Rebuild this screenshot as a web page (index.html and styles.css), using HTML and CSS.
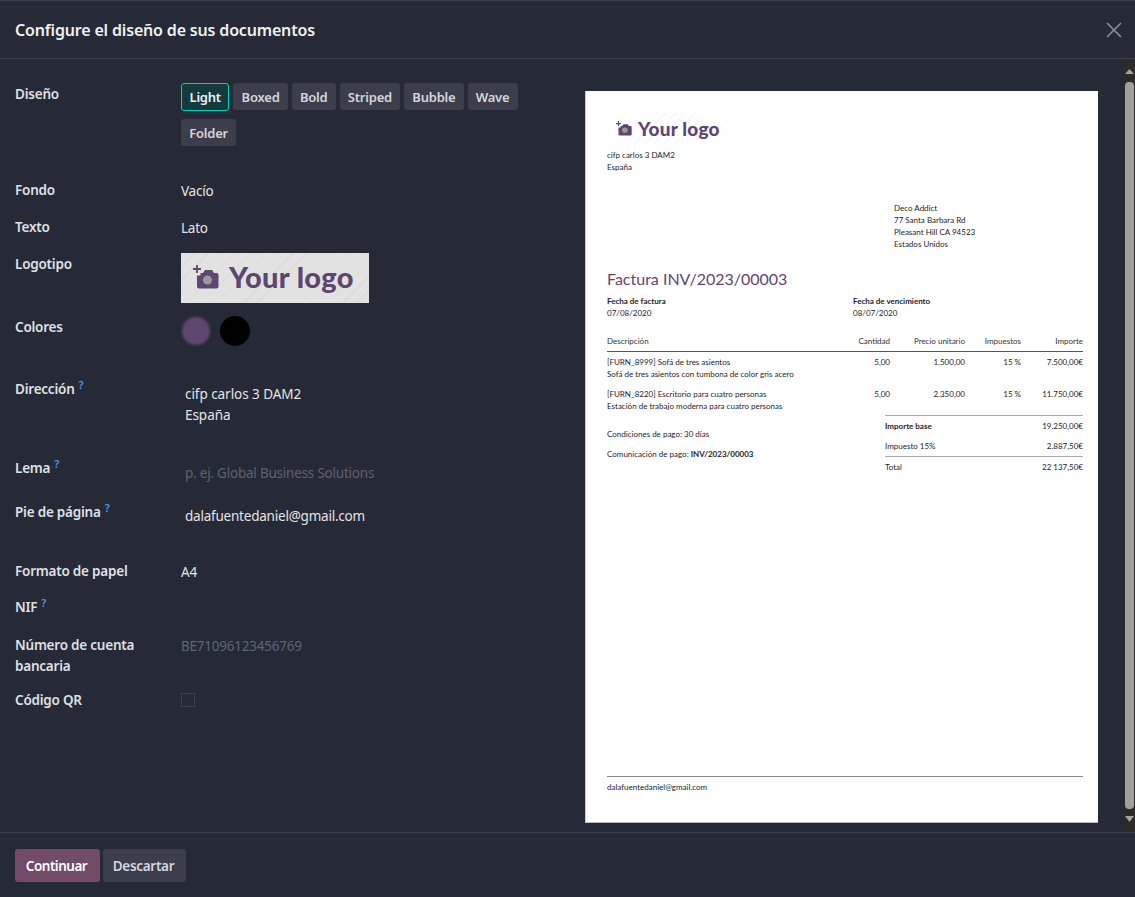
FILE: index.html
```html
<!DOCTYPE html>
<html lang="es">
<head>
<meta charset="utf-8">
<title>Configure el diseño de sus documentos</title>
<link rel="stylesheet" href="styles.css">
</head>
<body>
<div class="modal">
  <header class="head">
    <h1 class="title">Configure el diseño de sus documentos</h1>
    <svg class="close" width="16" height="16" viewBox="0 0 16 16"><path d="M1 1 15 15M15 1 1 15" stroke="#8b8e98" stroke-width="1.6" fill="none"/></svg>
  </header>
  <main class="body">
    <div class="content">
      <form class="form">
        <div class="row r-layout"><div class="label">Diseño</div>
          <div class="btns">
            <span class="opt active">Light</span><span class="opt">Boxed</span><span class="opt">Bold</span><span class="opt">Striped</span><span class="opt">Bubble</span><span class="opt">Wave</span><span class="opt">Folder</span>
          </div>
        </div>
        <div class="row r-37"><div class="label">Fondo</div><div class="val">Vacío</div></div>
        <div class="row r-37"><div class="label">Texto</div><div class="val">Lato</div></div>
        <div class="row r-logo"><div class="label">Logotipo</div>
          <div class="logo logo-big">
            <svg class="cam" viewBox="0 0 26 24"><path d="M4 0v8M0 4h8" stroke="#5f4670" stroke-width="1.800" fill="none"/><path d="M10 8l2-3h7l2 3h2.500a2 2 0 0 1 2 2v11.500a2 2 0 0 1-2 2H6a2 2 0 0 1-2-2V10.500h3.500V8z" fill="#5f4670"/><circle cx="14.500" cy="15" r="4.500" fill="#9a9a9a"/></svg>
            <span class="logotext">Your logo</span>
          </div>
        </div>
        <div class="row r-colors"><div class="label">Colores</div>
          <div class="swatches"><span class="sw sw-a"></span><span class="sw sw-b"></span></div>
        </div>
        <div class="row r-addr"><div class="label">Dirección<sup class="q">?</sup></div><div class="val pad addr">cifp carlos 3 DAM2<br>España</div></div>
        <div class="row r-lema"><div class="label">Lema<sup class="q">?</sup></div><div class="val pad muted">p. ej. Global Business Solutions</div></div>
        <div class="row r-pie"><div class="label">Pie de página<sup class="q">?</sup></div><div class="val pad pie">dalafuentedaniel@gmail.com</div></div>
        <div class="row r-36"><div class="label">Formato de papel</div><div class="val">A4</div></div>
        <div class="row r-38"><div class="label">NIF<sup class="q">?</sup></div><div class="val"></div></div>
        <div class="row r-55"><div class="label">Número de cuenta bancaria</div><div class="val iban">BE71096123456769</div></div>
        <div class="row"><div class="label">Código QR</div><div class="val"><span class="check"></span></div></div>
      </form>
      <section class="preview">
        <article class="paper">
          <div class="logo logo-small">
            <svg class="cam" viewBox="0 0 26 24"><path d="M4 0v8M0 4h8" stroke="#5f4670" stroke-width="1.800" fill="none"/><path d="M10 8l2-3h7l2 3h2.500a2 2 0 0 1 2 2v11.500a2 2 0 0 1-2 2H6a2 2 0 0 1-2-2V10.500h3.500V8z" fill="#5f4670"/><circle cx="14.500" cy="15" r="4.500" fill="#9a9a9a"/></svg>
            <span class="logotext">Your logo</span>
          </div>
          <div class="company">cifp carlos 3 DAM2<br>España</div>
          <div class="partner">Deco Addict<br>77 Santa Barbara Rd<br>Pleasant Hill CA 94523<br>Estados Unidos</div>
          <h2 class="inv-title">Factura INV/2023/00003</h2>
          <div class="dates">
            <div class="date"><b>Fecha de factura</b><br>07/08/2020</div>
            <div class="date"><b>Fecha de vencimiento</b><br>08/07/2020</div>
          </div>
          <div class="tbl thead"><span>Descripción</span><span>Cantidad</span><span>Precio unitario</span><span>Impuestos</span><span>Importe</span></div>
          <div class="tbl trow"><span>[FURN_8999] Sofá de tres asientos<br>Sofá de tres asientos con tumbona de color gris acero</span><span>5,00</span><span>1.500,00</span><span>15 %</span><span>7.500,00€</span></div>
          <div class="tbl trow"><span>[FURN_8220] Escritorio para cuatro personas<br>Estación de trabajo moderna para cuatro personas</span><span>5,00</span><span>2.350,00</span><span>15 %</span><span>11.750,00€</span></div>
          <div class="bottom">
            <div class="terms">
              <p class="term">Condiciones de pago: 30 días</p>
              <p class="term">Comunicación de pago: <b>INV/2023/00003</b></p>
            </div>
            <div class="totals">
              <div class="tot tot-base"><b>Importe base</b><span>19.250,00€</span></div>
              <div class="tot tot-tax"><span>Impuesto 15%</span><span>2.887,50€</span></div>
              <div class="tot tot-total"><span>Total</span><span>22 137,50€</span></div>
            </div>
          </div>
          <footer class="paper-foot">dalafuentedaniel@gmail.com</footer>
        </article>
      </section>
    </div>
    <div class="scrollbar">
      <svg class="arrow" width="11" height="17" viewBox="0 0 11 17"><path d="M5.500 7 10 12H1z" fill="#a3a3a3"/></svg>
      <div class="thumb"></div>
      <svg class="arrow" width="11" height="17" viewBox="0 0 11 17"><path d="M1 4h9L5.500 10z" fill="#a3a3a3"/></svg>
    </div>
  </main>
  <footer class="foot">
    <button class="btn primary" type="button">Continuar</button>
    <button class="btn secondary" type="button">Descartar</button>
  </footer>
</div>
</body>
</html>
```
FILE: styles.css
```css
* { box-sizing: border-box; }
html, body { margin: 0; height: 100%; }
body { background: #262a36; color: #e4e4e4; font-family: "Noto Sans", sans-serif; font-size: 13.500px; letter-spacing: -0.220px; line-height: 21px; overflow: hidden; }
.modal { height: 897px; display: flex; flex-direction: column; border-top: 1px solid #3c3e4b; }
.head { height: 58px; flex: none; display: flex; align-items: center; justify-content: space-between; padding: 0 13px 0 15px; border-bottom: 1px solid #3c3e4b; }
.title { margin: 0; padding-top: 1px; font-size: 16px; font-weight: 600; color: #f0f0f0; letter-spacing: -0.170px; }
.close { display: block; }
.body { flex: 1; min-height: 0; display: flex; }
.content { flex: 1; min-width: 0; display: flex; }
.form { flex: 0 0 585px; padding: 24px 0 0 15px; }
.row { display: flex; }
.label { flex: 0 0 166px; width: 166px; padding: 1px 20px 0 0; font-weight: 600; color: #dfe0e2; }
.val { flex: 1; padding-top: 2px; }
.val.pad { padding-left: 4px; padding-top: 6px; }
.val.addr { letter-spacing: -0.050px; }
.val.pie { padding-top: 5px; }
.muted { color: #5f626c; }
.val.iban { color: #5b6678; padding-top: 2px; }
.q { color: #4d9bea; font-size: 11px; line-height: 0; margin-left: 4px; font-weight: 600; }
.r-layout { height: 96px; }
.r-37 { height: 37px; }
.r-logo { height: 63px; }
.r-colors { height: 62px; }
.r-addr { height: 79px; }
.r-lema { height: 44px; }
.r-pie { height: 59px; }
.r-36 { height: 36px; }
.r-38 { height: 38px; }
.r-55 { height: 55px; }
.btns { display: flex; flex-wrap: wrap; gap: 8px 4px; width: 345px; align-content: flex-start; }
.opt { height: 27px; padding: 1px 8.200px 0; display: flex; align-items: center; background: #3c3e4b; border-radius: 3px; font-size: 13px; font-weight: 600; color: #d5d6da; }
.active { height: 28px; background: #133b3c; border: 1px solid #00d0c4; color: #eef; padding: 0 7.500px; }
.logo { display: flex; align-items: center; }
.logo-big { width: 188px; height: 50px; padding: 0 0 3px 12px; gap: 10px; background: repeating-linear-gradient(135deg, #e2e2e2 0 9px, #dbdbdb 9px 10px); }
.logo-big .cam { width: 26px; height: 24px; }
.logo-big .logotext { font-size: 29px; letter-spacing: 0.300px; }
.logotext { font-family: "Lato", sans-serif; font-weight: 900; color: #5f4670; line-height: 1; white-space: nowrap; }
.swatches { display: flex; gap: 9px; }
.sw { width: 30px; height: 30px; border-radius: 50%; }
.sw-a { background: #5f4670; border: 2px solid #44384f; }
.sw-b { background: #000; }
.check { display: block; width: 14px; height: 14px; margin-top: 2px; border: 1px solid #3f424d; border-radius: 1px; }
.preview { flex: 1; padding-top: 32px; }
.paper { width: 513px; height: 732px; background: #fff; border-left: 1px solid #ccc; border-bottom: 1px solid #bbb; padding: 22px 15px 0 21px; display: flex; flex-direction: column; color: #1d1d2b; font-family: "Lato", sans-serif; font-size: 8px; letter-spacing: 0; line-height: 12px; }
.logo-small { width: 120px; height: 32px; margin-bottom: 4px; padding: 0 0 2px 9px; gap: 6px; background: repeating-linear-gradient(135deg, #fff 0 6px, #f7f7f7 6px 7px); }
.logo-small .cam { width: 16px; height: 15px; }
.logo-small .logotext { font-size: 19px; letter-spacing: 0.200px; }
.partner { margin: 29px 0 0 287px; }
.inv-title { margin: 17px 0 0; font-size: 16px; line-height: 24px; font-weight: 400; color: #5f4670; }
.dates { display: flex; margin-top: 4px; }
.date { flex: 0 0 246px; }
.tbl { display: grid; grid-template-columns: 230px 53px 75px 56px 62px; }
.tbl span { white-space: nowrap; }
.tbl span:not(:first-child) { text-align: right; }
.thead { margin-top: 16px; padding-bottom: 4px; border-bottom: 1px solid #555; color: #333; }
.trow { padding-top: 4px; height: 31px; }
.trow + .trow { padding-top: 0; height: 24px; margin-top: 5px; }
.bottom { display: flex; justify-content: space-between; margin-top: 3px; }
.term { margin: 0 0 8px; }
.terms { padding-top: 13px; }
.totals { width: 198px; }
.tot { display: flex; justify-content: space-between; }
.tot-base { border-top: 1px solid #aaa; padding-top: 4px; height: 22px; }
.tot-tax { padding-top: 3px; height: 20px; border-bottom: 1px solid #aaa; }
.tot-total { padding-top: 4px; }
.paper-foot { margin-top: auto; margin-bottom: 29px; padding-top: 4px; border-top: 1px solid #888; }
.scrollbar { flex: 0 0 11px; background: #2b2b2b; display: flex; flex-direction: column; align-items: center; }
.arrow { flex: none; display: block; margin: 3px 0; }
.thumb { flex: 1; width: 9px; background: #9f9f9f; border-radius: 4px; }
.foot { height: 65px; flex: none; border-top: 1px solid #3c3e4b; display: flex; align-items: center; gap: 3px; padding: 0 15px; }
.btn { height: 33px; border: 0; border-radius: 3px; padding: 1px 2px 0 0; font: 600 13.500px "Noto Sans", sans-serif; letter-spacing: -0.300px; }
.primary { background: #714b67; color: #fff; width: 85px; letter-spacing: -0.500px; }
.secondary { background: #3c3e4b; color: #d5d6da; width: 83px; }
```
